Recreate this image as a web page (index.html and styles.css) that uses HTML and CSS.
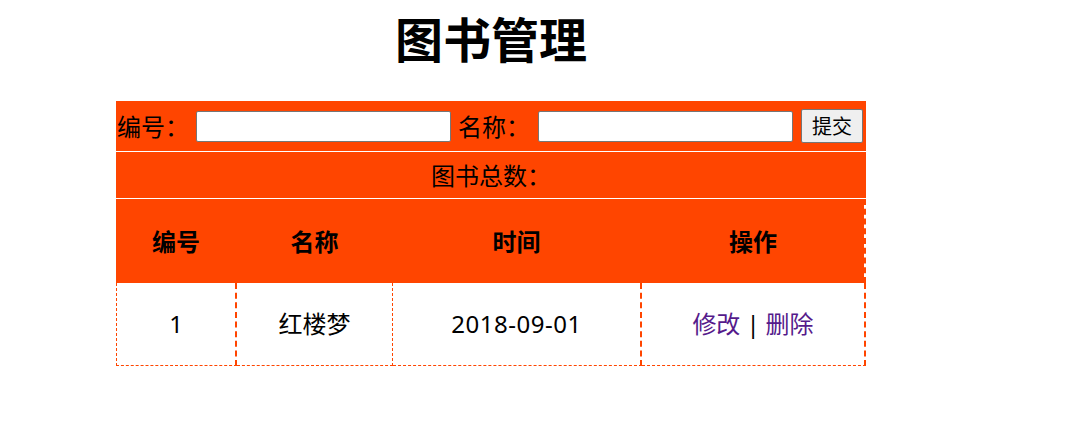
FILE: index.html
```html
<!DOCTYPE html>
<html lang="zh-CN">
<head>
<meta charset="utf-8">
<title>图书管理</title>
<link rel="stylesheet" href="styles.css">
</head>
<body>
<div class="page">
  <h1 class="title">图书管理</h1>
  <table class="books">
    <colgroup>
      <col class="c1"><col class="c2"><col class="c3"><col class="c4">
    </colgroup>
    <tr class="form-row">
      <td colspan="4">
        <div class="form">
          <span class="label">编号：</span>
          <input class="field" type="text">
          <span class="label label-gap">名称：</span>
          <input class="field field-gap" type="text">
          <button class="submit" type="button">提交</button>
        </div>
      </td>
    </tr>
    <tr class="count-row">
      <td colspan="4">图书总数：</td>
    </tr>
    <tr class="head-row">
      <th class="b1">编号</th>
      <th class="b2">名称</th>
      <th class="b3">时间</th>
      <th class="b4">操作</th>
    </tr>
    <tr class="data-row">
      <td class="b1">1</td>
      <td class="b2">红楼梦</td>
      <td class="b3 date">2018-09-01</td>
      <td class="b4"><a href="#" class="link">修改</a><span class="sep">|</span><a href="#" class="link">删除</a></td>
    </tr>
  </table>
</div>
</body>
</html>
```

FILE: styles.css
```css
* {
  box-sizing: border-box;
}

body {
  margin: 0;
  background: #ffffff;
  color: #000000;
  font-family: "Noto Sans", "Noto Sans CJK SC", sans-serif;
}

.page {
  width: 750px;
  margin-left: 116px;
  padding-top: 13px;
}

.title {
  margin: 0;
  font-size: 48px;
  line-height: 48px;
  font-weight: bold;
  text-align: center;
  font-family: "Noto Sans CJK SC", sans-serif;
}

.books {
  margin-top: 40px;
  width: 750px;
  table-layout: fixed;
  border-collapse: separate;
  border-spacing: 0;
  font-size: 24px;
  line-height: 1.3;
}

.c1 { width: 121px; }
.c2 { width: 156px; }
.c3 { width: 249px; }
.c4 { width: 224px; }

.books td,
.books th {
  padding: 0;
  text-align: center;
  vertical-align: middle;
}

.form-row td {
  height: 51px;
  background: #ff4500;
  border-bottom: 1px solid #ffffff;
}

.form {
  display: flex;
  align-items: center;
  padding-left: 1px;
}

.label {
  font-size: 24px;
  line-height: 1;
  font-family: "Noto Sans CJK SC", sans-serif;
}

.label-gap {
  margin-left: 7px;
}

.field {
  width: 255px;
  height: 31px;
  margin: 0 0 0 7px;
  padding: 1px 2px;
  border: 1px solid #767676;
  border-radius: 2px;
  background: #ffffff;
  font-size: 13px;
}

.field-gap {
  margin-left: 8px;
}

.submit {
  width: 62px;
  height: 34px;
  margin-left: 8px;
  padding: 0;
  border: 1px solid #767676;
  border-radius: 2px;
  background: #efefef;
  color: #000000;
  font-size: 20px;
  font-family: "Noto Sans CJK SC", sans-serif;
  line-height: 1;
}

.count-row td {
  height: 47px;
  background: #ff4500;
  border-bottom: 1px solid #ffffff;
  font-family: "Noto Sans CJK SC", sans-serif;
}

.head-row th {
  height: 84px;
  background: #ff4500;
  font-weight: bold;
  font-family: "Noto Sans CJK SC", sans-serif;
  border: 0 solid transparent;
}

.data-row td {
  height: 83px;
  border-bottom: 1px dashed #ff4500;
}

.date {
  letter-spacing: 0.5px;
}

.sep {
  margin: 0 6px;
  color: #000000;
}

.b1 {
  border-left: 1px dashed #ff4500;
  border-right: 2px dashed #ff4500;
}

.b2 {
  border-right: 1px dashed #ff4500;
}

.b3 {
  border-right: 2px dashed #ff4500;
}

.b4 {
  border-right: 2px dashed #ff4500;
}

.head-row th.b1 {
  border-left: 1px solid transparent;
  border-right: 2px solid transparent;
}

.head-row th.b2 {
  border-right: 1px solid transparent;
}

.head-row th.b3 {
  border-right: 2px solid transparent;
}

.head-row th.b4 {
  border-right: 2px dashed #ff4500;
  background-clip: padding-box;
}

.link {
  color: #551a8b;
  text-decoration: none;
}
```
